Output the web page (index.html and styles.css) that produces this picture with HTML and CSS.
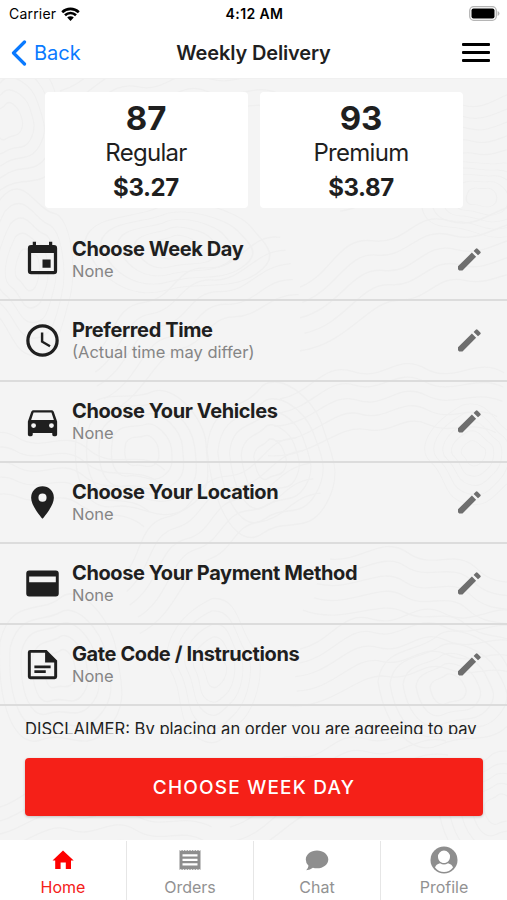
FILE: index.html
```html
<!DOCTYPE html>
<html lang="en">
<head>
  <meta charset="UTF-8">
  <meta name="viewport" content="width=device-width, initial-scale=1.0">
  <title>Weekly Delivery</title>
  <link rel="stylesheet" href="styles.css">
</head>
<body>
  <svg class="contours" viewBox="0 0 507 761">
    <defs>
      <g id="hill">
        <path d="M-70-8C-66-48-30-40-12-58S48-52 58-28 82 12 62 38 18 48-8 62-62 46-70-8Z"/>
        <path d="M-58-6C-54-38-26-34-10-46S38-42 48-22 66 10 50 30 16 38-6 50-52 38-58-6Z"/>
        <path d="M-45-5C-42-30-20-26-8-36S30-33 37-17 51 8 39 23 12 30-5 39-40 30-45-5Z"/>
        <path d="M-32-3C-30-20-14-19-6-26S22-23 27-12 36 6 28 17 9 21-4 28-28 21-32-3Z"/>
        <path d="M-18-2C-16-12-8-10-3-15S12-13 15-7 20 3 16 9 5 12-2 16-16 12-18-2Z"/>
      </g>
      <g id="slope">
        <path d="M0 0C30-12 34-46 66-42S104-70 136-60 184-84 214-72"/>
        <path d="M2 14C34 2 42-32 70-29S108-56 138-47 186-66 216-58"/>
        <path d="M0 28C38 18 46-18 76-15S112-42 142-34 184-50 218-44"/>
        <path d="M4 42C42 34 54-4 82-2S118-28 146-20 188-36 216-28"/>
        <path d="M0 58C44 52 62 12 90 12S124-12 150-6 190-20 218-12"/>
      </g>
      <g id="pencil">
        <path d="M0 18.300L13.900 4.600l4.200 4.200L4.500 22.500H1.200L0 21.300zM15.600 2.900L17.800.7q.9-.9 1.800 0L22.300 3.400q.9.900 0 1.800L20 7.300z"/>
      </g>
    </defs>
    <use href="#hill" transform="translate(8 42) scale(.8 1.1)"/>
    <use href="#slope" transform="translate(60 12) rotate(8)"/>
    <use href="#slope" transform="translate(340 80) scale(.9)"/>
    <use href="#hill" transform="translate(482 118) scale(.9 .6) rotate(30)"/>
    <use href="#slope" transform="translate(300 208) scale(1.1)"/>
    <use href="#hill" transform="translate(176 168) scale(1.3 .7)"/>
    <use href="#hill" transform="translate(28 190) scale(.7 1.2) rotate(50)"/>
    <use href="#slope" transform="translate(90 280) rotate(-14)"/>
    <use href="#hill" transform="translate(142 372) rotate(20)"/>
    <use href="#slope" transform="translate(-60 370) rotate(24)"/>
    <use href="#slope" transform="translate(280 320) rotate(12)"/>
    <use href="#hill" transform="translate(474 374) scale(.7) rotate(70)"/>
    <use href="#hill" transform="translate(270 380) scale(.9 1.2)"/>
    <use href="#slope" transform="translate(330 480) rotate(28)"/>
    <use href="#slope" transform="translate(120 500) rotate(-20)"/>
    <use href="#hill" transform="translate(60 590) scale(.9 1.2) rotate(12)"/>
    <use href="#hill" transform="translate(215 590) scale(.7 1) rotate(80)"/>
    <use href="#hill" transform="translate(448 610) scale(1 .9)"/>
    <use href="#slope" transform="translate(300 570) rotate(10)"/>
    <use href="#slope" transform="translate(-10 730) rotate(16)"/>
    <use href="#slope" transform="translate(230 720)"/>
    <use href="#hill" transform="translate(500 730) scale(.9)"/>
  </svg>

  <header class="header">
    <div class="status-bar">
      <div class="carrier">
        <span>Carrier</span>
        <svg class="wifi" viewBox="0 0 19 14">
          <path d="M1.200 5.200a12 12 0 0 1 16.600 0M4 8.200a8 8 0 0 1 11 0" fill="none" stroke="#000" stroke-width="2.600"/>
          <path d="M6.200 10.600a4.700 4.700 0 0 1 6.600 0L9.500 14z"/>
        </svg>
      </div>
      <div class="clock">4:12 AM</div>
      <svg class="battery" viewBox="0 0 31 15">
        <rect x=".7" y=".7" width="26.600" height="13.600" rx="4" fill="#fff" stroke="#b5b5b5" stroke-width="1.300"/>
        <rect x="2.500" y="2.500" width="23" height="10" rx="2"/>
        <path d="M28.600 5v5q1.900-.8 1.900-2.500T28.600 5z" fill="#b5b5b5"/>
      </svg>
    </div>
    <nav class="navbar">
      <a class="back">
        <svg viewBox="0 0 16 26"><path d="M13.500 2L2.500 13l11 11" fill="none" stroke="#0a7aff" stroke-width="3.200" stroke-linecap="round" stroke-linejoin="round"/></svg>
        <span>Back</span>
      </a>
      <h1>Weekly Delivery</h1>
      <div class="menu"><i></i><i></i><i></i></div>
    </nav>
  </header>

  <main class="content">
    <div class="prices">
      <div class="price-card">
        <strong>87</strong>
        <span>Regular</span>
        <b>$3.27</b>
      </div>
      <div class="price-card">
        <strong>93</strong>
        <span>Premium</span>
        <b>$3.87</b>
      </div>
    </div>

    <div class="row">
      <svg class="icon" viewBox="0 0 24 24"><path d="M19 19H5V8h14m-3-7v2H8V1H6v2H5a2 2 0 0 0-2 2v14a2 2 0 0 0 2 2h14a2 2 0 0 0 2-2V5a2 2 0 0 0-2-2h-1V1m-1 11h-5v5h5z"/></svg>
      <div class="text"><h2>Choose Week Day</h2><p>None</p></div>
      <svg class="edit" viewBox="0 0 23 23"><use href="#pencil"/></svg>
    </div>
    <div class="row">
      <svg class="icon" viewBox="0 0 24 24"><path d="M12 20a8 8 0 0 0 8-8 8 8 0 0 0-8-8 8 8 0 0 0-8 8 8 8 0 0 0 8 8m0-18a10 10 0 0 1 10 10 10 10 0 0 1-10 10A10 10 0 0 1 2 12 10 10 0 0 1 12 2m.5 5v5.250l4.500 2.670-.75 1.230L11 13V7z" fill-rule="evenodd"/></svg>
      <div class="text"><h2>Preferred Time</h2><p>(Actual time may differ)</p></div>
      <svg class="edit" viewBox="0 0 23 23"><use href="#pencil"/></svg>
    </div>
    <div class="row">
      <svg class="icon" viewBox="0 0 24 24"><path d="M5 11l1.500-4.500h11L19 11m-1.500 5a1.500 1.500 0 0 1-1.500-1.500 1.500 1.500 0 0 1 1.500-1.500 1.500 1.500 0 0 1 1.500 1.500 1.500 1.500 0 0 1-1.500 1.500m-11 0A1.500 1.500 0 0 1 5 14.500 1.500 1.500 0 0 1 6.500 13 1.500 1.500 0 0 1 8 14.500 1.500 1.500 0 0 1 6.500 16M18.920 6c-.2-.58-.76-1-1.420-1h-11c-.66 0-1.220.42-1.420 1L3 12v8a1 1 0 0 0 1 1h1a1 1 0 0 0 1-1v-1h12v1a1 1 0 0 0 1 1h1a1 1 0 0 0 1-1v-8z"/></svg>
      <div class="text"><h2>Choose Your Vehicles</h2><p>None</p></div>
      <svg class="edit" viewBox="0 0 23 23"><use href="#pencil"/></svg>
    </div>
    <div class="row">
      <svg class="icon" viewBox="0 0 24 24"><path d="M12 11.500A2.500 2.500 0 0 1 9.500 9 2.500 2.500 0 0 1 12 6.500 2.500 2.500 0 0 1 14.500 9a2.500 2.500 0 0 1-2.500 2.500M12 2a7 7 0 0 0-7 7c0 5.250 7 13 7 13s7-7.750 7-13a7 7 0 0 0-7-7z"/></svg>
      <div class="text"><h2>Choose Your Location</h2><p>None</p></div>
      <svg class="edit" viewBox="0 0 23 23"><use href="#pencil"/></svg>
    </div>
    <div class="row">
      <svg class="icon" viewBox="0 0 24 24"><path d="M3.800 4h16.400A1.800 1.800 0 0 1 22 5.800v12.400a1.800 1.800 0 0 1-1.800 1.800H3.800A1.800 1.800 0 0 1 2 18.200V5.800A1.800 1.800 0 0 1 3.800 4zM3.800 7.700v3.500h16.400V7.700z" fill-rule="evenodd"/></svg>
      <div class="text"><h2>Choose Your Payment Method</h2><p>None</p></div>
      <svg class="edit" viewBox="0 0 23 23"><use href="#pencil"/></svg>
    </div>
    <div class="row">
      <svg class="icon" viewBox="0 0 24 24"><path d="M4.500 3h10L21 9.500v10a1.500 1.500 0 0 1-1.500 1.500h-15A1.500 1.500 0 0 1 3 19.500v-15A1.500 1.500 0 0 1 4.500 3zM4.800 4.800v14.400h14.400v-8.400h-5.600v-6zM7 12.600h10v1.700H7zM7 15.500h7v1.700H7z" fill-rule="evenodd"/></svg>
      <div class="text"><h2>Gate Code / Instructions</h2><p>None</p></div>
      <svg class="edit" viewBox="0 0 23 23"><use href="#pencil"/></svg>
    </div>

    <p class="disclaimer">DISCLAIMER: By placing an order you are agreeing to pay</p>
  </main>

  <div class="action">
    <button type="button">CHOOSE WEEK DAY</button>
  </div>

  <footer class="tabs">
    <a class="tab active">
      <svg viewBox="0 0 28 28"><path d="M14 4.500L24.700 14.600H22V23h-5.200v-6.600h-5.200V23H6.200v-8.400H3.500z"/></svg>
      <span>Home</span>
    </a>
    <a class="tab">
      <svg viewBox="0 0 28 28"><path d="M3.500 4l1.300 1 1.300-1 1.300 1 1.300-1L10 5l1.300-1 1.300 1L14 4l1.300 1 1.300-1L18 5l1.300-1 1.300 1L22 4l1.300 1 1.200-1v20l-1.200-1-1.300 1-1.300-1-1.400 1-1.300-1-1.300 1-1.300-1-1.400 1-1.300-1-1.300 1-1.300-1-1.400 1-1.300-1-1.300 1-1.300-1-1.300 1zM6.500 8.200v2.300h15V8.200zm0 4.500V15h15v-2.300zm0 4.600v2.300h15v-2.300z" fill-rule="evenodd"/></svg>
      <span>Orders</span>
    </a>
    <a class="tab">
      <svg viewBox="0 0 28 28"><path d="M14 4.500c6.200 0 11.300 3.900 11.300 8.900s-5 8.800-11.300 8.800q-2.200 0-4.100-.5-2.700 2.200-6.700 2.600 2-2 2.300-4.500-2.700-2.400-2.700-6.400c0-5 5-8.900 11.200-8.900z"/></svg>
      <span>Chat</span>
    </a>
    <a class="tab">
      <svg viewBox="0 0 28 28"><circle cx="14" cy="14" r="13.500"/><path d="M14 4.600a6 6 0 0 1 6 6.200c0 3.500-2.600 6.300-6 6.300s-6-2.800-6-6.300a6 6 0 0 1 6-6.200zM5 21.500q1-3.300 5-4.300 4 2.600 8 0 4 1 5 4.300-3.700 4.500-9 4.500t-9-4.500z" fill="#fff"/></svg>
      <span>Profile</span>
    </a>
  </footer>
</body>
</html>
```

FILE: styles.css
```css
* {
  box-sizing: border-box;
}

body {
  position: relative;
  margin: 0;
  height: 900px;
  overflow: hidden;
  display: flex;
  flex-direction: column;
  background: #f4f4f4;
  color: #1f1f1f;
  font-family: Inter, "Liberation Sans", sans-serif;
}

h1, h2, p {
  margin: 0;
}

svg {
  display: block;
}

/* map lines behind everything */
.contours {
  position: absolute;
  top: 79px;
  left: 0;
  width: 507px;
  height: 761px;
  z-index: -1;
  fill: none;
  stroke: #efefef;
  stroke-width: 1.3;
}

.header {
  height: 79px;
  background: #fff;
  border-bottom: 1px solid #f0f0f0;
}

.status-bar {
  display: grid;
  grid-template-columns: 1fr 1fr 1fr;
  align-items: center;
  height: 27px;
  padding: 0 7px 0 9px;
  color: #000;
  font-size: 14px;
}

.carrier {
  display: flex;
  align-items: center;
  gap: 5px;
}

.carrier span {
  letter-spacing: 0.2px;
}

.wifi {
  width: 19px;
  height: 14px;
}

.clock {
  text-align: center;
  font-weight: 600;
  letter-spacing: 0.4px;
}

.battery {
  justify-self: end;
  width: 31px;
  height: 15px;
}

.navbar {
  display: grid;
  grid-template-columns: 1fr 2fr 1fr;
  align-items: center;
  height: 51px;
  padding: 0 17px 0 11px;
}

.back {
  display: flex;
  align-items: center;
  gap: 7px;
  color: #0a7aff;
  font-size: 20px;
}

.back svg {
  width: 16px;
  height: 26px;
}

h1 {
  padding-left: 6px;
  text-align: center;
  font-size: 20px;
  font-weight: 600;
  letter-spacing: -0.15px;
}

.menu {
  justify-self: end;
  display: flex;
  flex-direction: column;
  gap: 5px;
  width: 28px;
}

.menu i {
  height: 3px;
  border-radius: 1px;
  background: #000;
}

.content {
  height: 655px;
  overflow: hidden;
}

.prices {
  display: flex;
  justify-content: center;
  gap: 12px;
  height: 141px;
  padding-top: 13px;
}

.price-card {
  display: flex;
  flex-direction: column;
  align-items: center;
  width: 203px;
  height: 116px;
  padding-top: 6px;
  border-radius: 4px;
  background: #fff;
}

.price-card strong {
  font-size: 33px;
  line-height: 40px;
}

.price-card span {
  font-size: 24px;
  line-height: 30px;
  letter-spacing: -0.7px;
}

.price-card b {
  font-size: 24px;
  line-height: 40px;
  font-weight: 700;
  letter-spacing: -0.4px;
}

.row {
  display: flex;
  align-items: center;
  height: 81px;
  padding: 0 26px 0 23px;
  border-bottom: 2px solid #dcdcdc;
}

.icon {
  width: 39px;
  height: 39px;
  margin-right: 10px;
  fill: #1f1f1f;
}

.text {
  flex: 1;
  padding-bottom: 2px;
}

h2 {
  font-size: 20px;
  line-height: 24px;
  font-weight: 650;
  letter-spacing: -0.4px;
}

.text p {
  color: #858585;
  font-size: 16.500px;
  line-height: 20px;
}

.edit {
  width: 23px;
  height: 23px;
  fill: #6e6e6e;
}

.disclaimer {
  padding: 13px 0 0 25px;
  font-size: 16.600px;
  line-height: 20px;
  white-space: nowrap;
}

.action {
  height: 106px;
  padding: 24px 24px 0 25px;
}

.action button {
  display: block;
  width: 100%;
  height: 58px;
  border: 0;
  border-radius: 4px;
  background: #f52018;
  box-shadow: 0 1px 3px rgba(0, 0, 0, 0.2);
  color: #fff;
  font-family: inherit;
  font-size: 19px;
  font-weight: 500;
  letter-spacing: 1.2px;
}

.tabs {
  display: flex;
  height: 60px;
  padding-top: 1px;
  background: #fff;
}

.tab {
  flex: 1;
  display: flex;
  flex-direction: column;
  align-items: center;
  padding-top: 5px;
  color: #929292;
  font-size: 16px;
  line-height: 20px;
}

.tab + .tab {
  border-left: 1px solid #e6e6e6;
}

.tab svg {
  width: 28px;
  height: 28px;
  margin-bottom: 3px;
  fill: #8e8e8e;
}

.tab.active {
  color: #f52018;
}

.tab.active svg {
  fill: #fe0000;
}
```
